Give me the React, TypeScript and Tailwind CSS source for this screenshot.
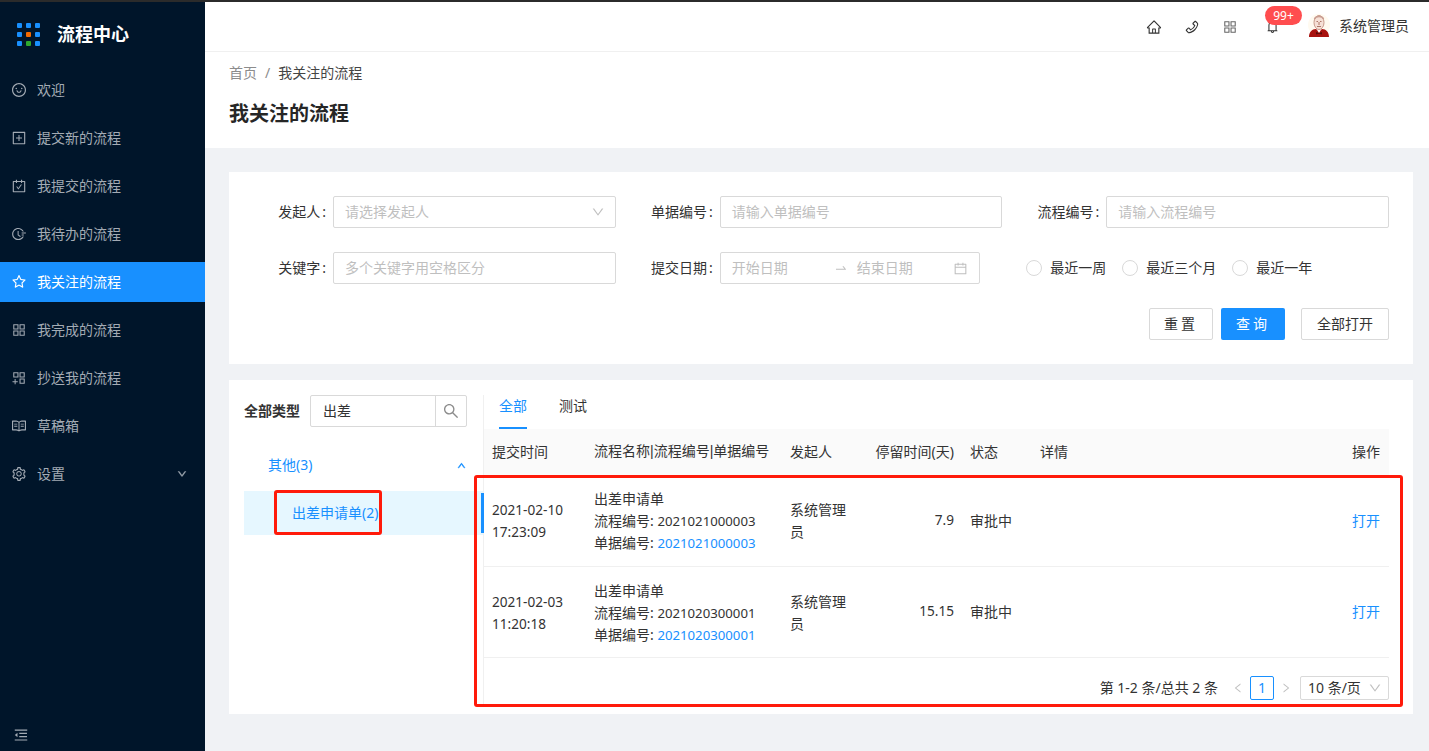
import React from "react";
import {
  AiOutlineAppstore,
  AiOutlineAppstoreAdd,
  AiOutlineBell,
  AiOutlineCalendar,
  AiOutlineCarryOut,
  AiOutlineDown,
  AiOutlineFieldTime,
  AiOutlineHome,
  AiOutlineLeft,
  AiOutlineMenuFold,
  AiOutlinePhone,
  AiOutlinePlusSquare,
  AiOutlineRead,
  AiOutlineRight,
  AiOutlineSearch,
  AiOutlineSetting,
  AiOutlineSmile,
  AiOutlineStar,
  AiOutlineSwapRight,
  AiOutlineUp,
} from "react-icons/ai";

const menu = [
  { label: "欢迎", icon: AiOutlineSmile },
  { label: "提交新的流程", icon: AiOutlinePlusSquare },
  { label: "我提交的流程", icon: AiOutlineCarryOut },
  { label: "我待办的流程", icon: AiOutlineFieldTime },
  { label: "我关注的流程", icon: AiOutlineStar, active: true },
  { label: "我完成的流程", icon: AiOutlineAppstore },
  { label: "抄送我的流程", icon: AiOutlineAppstoreAdd },
  { label: "草稿箱", icon: AiOutlineRead },
  { label: "设置", icon: AiOutlineSetting, arrow: true },
];

const rows = [
  {
    date: "2021-02-10",
    time: "17:23:09",
    no: "2021021000003",
    days: "7.9",
    marked: true,
  },
  {
    date: "2021-02-03",
    time: "11:20:18",
    no: "2021020300001",
    days: "15.15",
    marked: false,
  },
];

const Logo = () => (
  <div className="grid grid-cols-3 gap-[4px] w-[23px]">
    {["#1890ff", "#1890ff", "#1890ff", "#1890ff", "#f56a00", "#1890ff", "#1890ff", "#2ea82e", "#1890ff"].map((c, i) => (
      <span key={i} className="w-[5px] h-[5px] rounded-[1px]" style={{ backgroundColor: c }} />
    ))}
  </div>
);

const Avatar = () => (
  <svg width="22" height="24" viewBox="0 0 22 24" className="-mt-[2px]">
    <circle cx="11" cy="11" r="11" fill="#fffaf0" />
    <path d="M1 23c0-5 3-8 7-8l3 2 3-2c4 0 7 3 7 8z" fill="#a8120f" />
    <path d="M8.500 15h5L11 19z" fill="#fff" />
    <path d="M8 18l3 1 3-1v2.500l-3-.8-3 .8z" fill="#5a0a08" />
    <ellipse cx="11" cy="8.500" rx="5" ry="7" fill="#f6e0d6" stroke="#c79a8a" strokeWidth="1" />
    <path d="M6.500 5c1-3.500 8-3.500 9 0" fill="none" stroke="#c99c90" strokeWidth="1.500" />
    <path d="M8.500 7.500h1.500M12 7.500h1.500M11 8v3M9 12.500h4" stroke="#9a5a4a" strokeWidth="0.800" />
  </svg>
);

const Sidebar = () => (
  <aside className="w-[205px] shrink-0 bg-[#00152a] flex flex-col">
    <div className="h-[64px] mb-[4px] flex items-center pl-[17px] gap-[17px]">
      <Logo />
      <span className="text-white text-[18px] font-bold">流程中心</span>
    </div>
    <nav className="flex flex-col gap-2 flex-1">
      {menu.map((m) => {
        const Icon = m.icon;
        return (
          <div
            key={m.label}
            className={`h-[40px] flex items-center pl-[11px] pr-[18px] gap-[10px] text-[14px] ${
              m.active ? "bg-[#1890ff] text-white" : "text-[#a3abb4]"
            }`}
          >
            <Icon className="w-[16px] h-[16px]" />
            <span className="flex-1 pb-[2px]">{m.label}</span>
            {m.arrow && <AiOutlineDown className="w-[10px] h-[10px] stroke-[60px]" />}
          </div>
        );
      })}
    </nav>
    <div className="h-[24px] pl-[13px] text-[#a3abb4]">
      <AiOutlineMenuFold className="w-[16px] h-[16px]" />
    </div>
  </aside>
);

const Header = () => (
  <header className="h-[50px] bg-white border-b border-[#f0f0f0] flex items-center justify-end pr-[20px] text-[#333]">
    <AiOutlineHome className="w-[16px] h-[16px]" />
    <AiOutlinePhone className="w-[16px] h-[16px] ml-[22px]" />
    <AiOutlineAppstore className="w-[16px] h-[16px] ml-[22px] text-[#666]" />
    <div className="relative ml-[27px] mr-[28px]">
      <AiOutlineBell className="w-[15px] h-[15px]" />
      <span className="absolute -top-[13px] left-0 h-[19px] w-[37px] rounded-full bg-[#ff4d4f] text-white text-[12px] flex items-center justify-center">
        99+
      </span>
    </div>
    <Avatar />
    <span className="ml-[9px] text-[14px] pb-[2px]">系统管理员</span>
  </header>
);

const Field = ({ label, children }: { label: string; children: React.ReactNode }) => (
  <div className="flex items-center gap-[7px]">
    <span className="w-[81px] pb-[2px] text-right text-[14px] text-[#333] whitespace-nowrap">
      {label}
      <span className="ml-[2px]">:</span>
    </span>
    {children}
  </div>
);

const Input = ({ placeholder, icon }: { placeholder: string; icon?: React.ReactNode }) => (
  <div className="flex-1 h-[32px] border border-[#d9d9d9] rounded-[2px] flex items-center justify-between px-[10px] text-[14px] text-[#bfbfbf]">
    <span className="pl-[1px] pb-[2px]">{placeholder}</span>
    {icon}
  </div>
);

const Radio = ({ label, className }: { label: string; className: string }) => (
  <label className={`flex items-center gap-[8px] text-[14px] text-[#333] ${className}`}>
    <span className="w-[16px] h-[16px] rounded-full border border-[#d9d9d9]" />
    <span className="pb-[2px]">{label}</span>
  </label>
);

const SearchForm = () => (
  <section className="bg-white pl-[16px] pr-[24px] py-[24px] flex flex-col gap-[24px]">
    <div className="grid grid-cols-3 gap-x-[16px] gap-y-[24px]">
      <Field label="发起人">
        <Input placeholder="请选择发起人" icon={<AiOutlineDown className="w-[14px] h-[14px] text-[#bfbfbf]" />} />
      </Field>
      <Field label="单据编号">
        <Input placeholder="请输入单据编号" />
      </Field>
      <Field label="流程编号">
        <Input placeholder="请输入流程编号" />
      </Field>
      <Field label="关键字">
        <Input placeholder="多个关键字用空格区分" />
      </Field>
      <Field label="提交日期">
        <div className="w-[260px] h-[32px] border border-[#d9d9d9] rounded-[2px] flex items-center px-[11px] text-[14px] text-[#bfbfbf]">
          <span className="w-[102px] pb-[2px]">开始日期</span>
          <AiOutlineSwapRight className="w-[14px] h-[14px] text-[#bfbfbf]" />
          <span className="ml-[9px] flex-1 pb-[2px]">结束日期</span>
          <AiOutlineCalendar className="w-[15px] h-[15px]" />
        </div>
      </Field>
      <div className="flex items-center pl-[8px]">
        <Radio label="最近一周" className="" />
        <Radio label="最近三个月" className="ml-[16px]" />
        <Radio label="最近一年" className="ml-[16px]" />
      </div>
    </div>
    <div className="flex justify-end text-[14px] text-[#333]">
      <button className="w-[64px] h-[32px] pb-[2px] border border-[#d9d9d9] rounded-[2px] tracking-[3px]">重置</button>
      <button className="w-[64px] h-[32px] pb-[2px] ml-[8px] bg-[#1890ff] text-white rounded-[2px] tracking-[3px]">查询</button>
      <button className="w-[88px] h-[32px] pb-[2px] ml-[16px] border border-[#d9d9d9] rounded-[2px]">全部打开</button>
    </div>
  </section>
);

const TypePanel = () => (
  <div className="w-[255px] shrink-0 border-r border-[#f0f0f0] pl-[15px]">
    <div className="flex items-center">
      <span className="text-[14px] pb-[2px] font-bold text-[#333]">全部类型</span>
      <div className="ml-[10px] w-[157px] h-[32px] border border-[#d9d9d9] rounded-[2px] flex items-center text-[14px] text-[#333]">
        <span className="flex-1 pl-[12px] pb-[2px]">出差</span>
        <span className="w-[31px] h-full border-l border-[#d9d9d9] flex items-center justify-center text-[#8c8c8c]">
          <AiOutlineSearch className="w-[18px] h-[18px]" />
        </span>
      </div>
    </div>
    <div className="mt-[18px] h-[40px] flex items-center pl-[24px] pr-[17px] justify-between text-[14px] text-[#1890ff]">
      <span className="pb-[2px]">其他(3)</span>
      <AiOutlineUp className="w-[9px] h-[9px] stroke-[80px]" />
    </div>
    <div className="mt-[6px] h-[44px] flex items-center pl-[48px] pb-[2px] bg-[#e6f7ff] text-[14px] text-[#1890ff]">出差申请单(2)</div>
  </div>
);

const Pipe = () => <span className="font-['Liberation_Sans']">|</span>;

const TablePanel = () => (
  <div className="flex-1 min-w-0 pr-[24px]">
    <div className="h-[34px] pl-[15px] flex gap-[32px] text-[14px] leading-[22px]">
      <span className="h-full border-b-2 border-[#1890ff] text-[#1890ff]">全部</span>
      <span className="text-[#333]">测试</span>
    </div>
    <table className="w-full table-fixed text-[14px] text-[#333]">
      <thead>
        <tr className="h-[46px] bg-[#fafafa] text-left">
          <th className="w-[102px] pl-[8px] pb-[2px] font-normal">提交时间</th>
          <th className="w-[196px] pl-[8px] pb-[2px] font-normal whitespace-nowrap">
            流程名称<Pipe />流程编号<Pipe />单据编号
          </th>
          <th className="w-[75px] pl-[8px] pb-[2px] font-normal">发起人</th>
          <th className="w-[105px] pr-[8px] pb-[2px] font-normal text-right whitespace-nowrap">停留时间(天)</th>
          <th className="w-[70px] pl-[8px] pb-[2px] font-normal">状态</th>
          <th className="pl-[8px] pb-[2px] font-normal">详情</th>
          <th className="w-[60px] pr-[9px] pb-[2px] font-normal text-right">操作</th>
        </tr>
      </thead>
      <tbody>
        {rows.map((r) => (
          <tr key={r.no} className="h-[91px] border-b border-[#f0f0f0]">
            <td className="relative pl-[8px] pt-[2px] leading-[22px] text-[13.6px]">
              {r.marked && <span className="absolute left-[-3px] top-[18px] w-[3px] h-[40px] bg-[#1890ff]" />}
              {r.date}
              <br />
              {r.time}
            </td>
            <td className="pl-[8px] pt-[2px] leading-[22px] whitespace-nowrap">
              出差申请单
              <br />
              流程编号: <span className="text-[13.2px]">{r.no}</span>
              <br />
              单据编号: <span className="text-[13.2px] text-[#1890ff]">{r.no}</span>
            </td>
            <td className="px-[8px] pt-[2px] leading-[22px]">系统管理员</td>
            <td className="pr-[8px] text-right text-[13.6px]">{r.days}</td>
            <td className="pl-[8px]">审批中</td>
            <td />
            <td className="pr-[9px] text-right text-[#1890ff]">打开</td>
          </tr>
        ))}
      </tbody>
    </table>
    <div className="mt-[18px] h-[24px] flex items-center justify-end text-[14px] text-[#333]">
      <span>第 1-2 条/总共 2 条</span>
      <AiOutlineLeft className="ml-[14px] w-[12px] h-[12px] text-[#bfbfbf]" />
      <span className="ml-[6px] w-[24px] h-[24px] border border-[#1890ff] rounded-[2px] text-[#1890ff] flex items-center justify-center">1</span>
      <AiOutlineRight className="ml-[6px] w-[12px] h-[12px] text-[#bfbfbf]" />
      <div className="ml-[8px] w-[89px] h-[24px] border border-[#d9d9d9] rounded-[2px] flex items-center justify-between pl-[7px] pr-[6px]">
        <span className="whitespace-nowrap">10 条/页</span>
        <AiOutlineDown className="w-[14px] h-[14px] text-[#bfbfbf]" />
      </div>
    </div>
  </div>
);

export default function App() {
  return (
    <div className="h-[751px] w-[1429px] overflow-hidden flex flex-col bg-[#f0f2f5] font-['Noto_Sans','Noto_Sans_CJK_SC',sans-serif]">
      <div className="h-[2px] bg-[#2b2b2b] shrink-0" />
      <div className="flex-1 flex min-h-0">
        <Sidebar />
        <main className="flex-1 min-w-0 relative">
          <Header />
          <div className="h-[96px] bg-white pl-[24px] pt-[10px]">
            <div className="text-[14px] text-[#8c8c8c]">
              首页<span className="mx-[8px]">/</span>
              <span className="text-[#444]">我关注的流程</span>
            </div>
            <h1 className="mt-[16px] text-[20px] font-bold text-[#262626]">我关注的流程</h1>
          </div>
          <div className="pl-[24px] pr-[16px] pt-[24px] flex flex-col gap-[16px]">
            <SearchForm />
            <section className="bg-white flex h-[334px] pt-[15px] pb-[9px]">
              <TypePanel />
              <TablePanel />
            </section>
          </div>
          {/* red annotation boxes drawn on top of the screenshot */}
          <div className="absolute left-[69px] top-[488px] w-[108px] h-[45px] border-[3px] border-[#ff1a0a] rounded-[3px]" />
          <div className="absolute left-[269px] top-[473px] w-[929px] h-[232px] border-[3px] border-[#ff1a0a] rounded-[3px]" />
        </main>
      </div>
    </div>
  );
}
